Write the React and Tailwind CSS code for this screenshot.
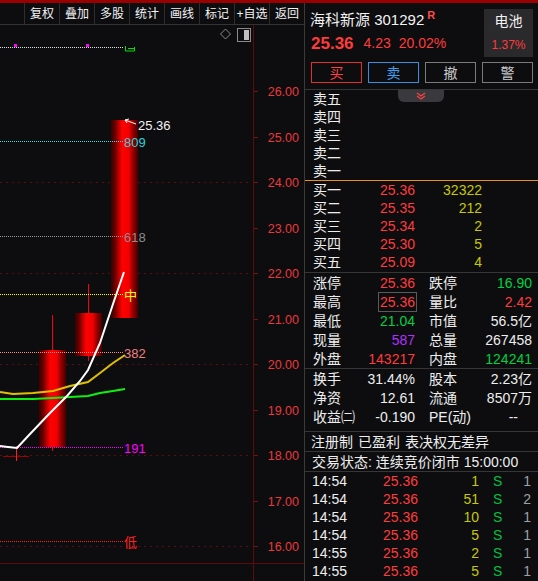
import React from "react";

const FONT = "font-['Liberation_Sans','Noto_Sans_CJK_SC',sans-serif]";

const tools = ["复权", "叠加", "多股", "统计", "画线", "标记", "+自选", "返回"];
const sells = ["卖五", "卖四", "卖三", "卖二", "卖一"];
const buys = [
  ["买一", "25.36", "32322"],
  ["买二", "25.35", "212"],
  ["买三", "25.34", "2"],
  ["买四", "25.30", "5"],
  ["买五", "25.09", "4"],
];

// label, value, colour, label, value, colour
const stats = [
  ["涨停", "25.36", "text-[#ff3b3b]", "跌停", "16.90", "text-[#00d040]"],
  ["最高", "25.36", "text-[#ff3b3b]", "量比", "2.42", "text-[#ff3b3b]"],
  ["最低", "21.04", "text-[#00d040]", "市值", "56.5亿", "text-[#eeeeee]"],
  ["现量", "587", "text-[#b030ff]", "总量", "267458", "text-[#eeeeee]"],
  ["外盘", "143217", "text-[#ff3b3b]", "内盘", "124241", "text-[#00d040]"],
];

const stats2 = [
  ["换手", "31.44%", "股本", "2.23亿"],
  ["净资", "12.61", "流通", "8507万"],
  ["收益㈡", "-0.190", "PE(动)", "--"],
];

const ticks = [
  ["14:54", "25.36", "1", "1"],
  ["14:54", "25.36", "51", "2"],
  ["14:54", "25.36", "10", "1"],
  ["14:54", "25.36", "5", "1"],
  ["14:55", "25.36", "2", "1"],
  ["14:55", "25.36", "5", "1"],
];

const py = (p) => Math.round(91 + (26 - p) * 45.5);

function Chart() {
  const prices = [26, 25, 24, 23, 22, 21, 20, 19, 18, 17, 16];
  const fib = [
    { y: 141, c: "#3ee0e0", t: "809", tc: "#30d0d8" },
    { y: 236, c: "#9a9a9a", t: "618", tc: "#8c8c8c" },
    { y: 294, c: "#ffff00", t: "中", tc: "#ffff00" },
    { y: 352, c: "#ff8a8a", t: "382", tc: "#f08080" },
    { y: 447, c: "#ff00ff", t: "191", tc: "#ff00ff" },
    { y: 541, c: "#ff2020", t: "低", tc: "#ff2020" },
  ];
  return (
    <svg width="304" height="556" viewBox="0 25 304 556" className="block" fontFamily="Liberation Sans, Noto Sans CJK SC, sans-serif">
      <defs>
        <linearGradient id="cg" x1="0" x2="1" y1="0" y2="0">
          <stop offset="0" stopColor="#3a0000" />
          <stop offset="0.15" stopColor="#680000" />
          <stop offset="0.3" stopColor="#c40000" />
          <stop offset="0.42" stopColor="#ff0000" />
          <stop offset="0.66" stopColor="#f00000" />
          <stop offset="0.83" stopColor="#8c0000" />
          <stop offset="1" stopColor="#480000" />
        </linearGradient>
      </defs>

      {/* grid + axis */}
      {[24, 22, 20, 18, 16].map((p) => (
        <line key={p} x1="0" x2="250" y1={py(p) + 0.5} y2={py(p) + 0.5} stroke="#5e0b0b" strokeDasharray="2 4" />
      ))}
      <line x1="253.5" x2="253.5" y1="25" y2="581" stroke="#5e0b0b" />
      <line x1="0" x2="304" y1="563.5" y2="563.5" stroke="#5e0b0b" />
      {prices.map((p) => (
        <g key={p}>
          <line x1="254" x2="258" y1={py(p) + 0.5} y2={py(p) + 0.5} stroke="#7a1212" />
          <text x="299" y={py(p) + 0.5} textAnchor="end" dominantBaseline="central" fill="#e83a3a" fontSize="12.5">
            {p.toFixed(2)}
          </text>
        </g>
      ))}

      {/* top icons */}
      <polygon points="225.5,29 230.5,34 225.5,39 220.5,34" fill="none" stroke="#8a8a8a" />
      <rect x="237.5" y="28.5" width="13" height="13" fill="none" stroke="#8a8a8a" />
      <rect x="244" y="30" width="5" height="10" fill="#c0c0c0" />

      {/* top marker line */}
      <line x1="0" x2="124" y1="47.5" y2="47.5" stroke="#e0e0e0" strokeDasharray="1 1" />
      <rect x="14" y="44" width="3" height="3" fill="#ff00ff" />
      <rect x="86" y="44" width="3" height="3" fill="#ff00ff" />
      <path d="M125.5 46 v5 h9 v-4 M128 48.5 h6" fill="none" stroke="#00e000" />

      {/* candles */}
      <line x1="52.5" x2="52.5" y1="315" y2="451" stroke="#ff0000" />
      <rect x="39" y="350" width="27" height="97" fill="url(#cg)" />
      <line x1="88.5" x2="88.5" y1="284" y2="361" stroke="#ff0000" />
      <rect x="75" y="313" width="27" height="43" fill="url(#cg)" />
      <rect x="111" y="120" width="27" height="198" fill="url(#cg)" />

      {/* fib lines */}
      {fib.map((f) => (
        <g key={f.t}>
          <line x1="0" x2="123" y1={f.y + 0.5} y2={f.y + 0.5} stroke={f.c} strokeDasharray="1 1" />
          <text x="124" y={f.y + 1} dominantBaseline="central" fill={f.tc} fontSize="13">
            {f.t}
          </text>
        </g>
      ))}

      {/* high marker */}
      <path d="M125 120 L136 124 M125 120 L129 119 M125 120 L127 123" fill="none" stroke="#ffffff" strokeWidth="1" />
      <text x="138" y="125.5" dominantBaseline="central" fill="#f2f2f2" fontSize="13">
        25.36
      </text>

      {/* low cross */}
      <line x1="3" x2="29" y1="456.5" y2="456.5" stroke="#a00000" />
      <line x1="16.5" x2="16.5" y1="446" y2="461" stroke="#ff2020" />

      {/* moving averages */}
      <polyline
        points="0,399 33,399 53,398 70,397 88,396 100,393 113,391 125,389"
        fill="none"
        stroke="#10f010"
        strokeWidth="2"
      />
      <polyline
        points="0,392 13,394 33,393 53,391 70,386 88,382 100,373 113,363 125,355"
        fill="none"
        stroke="#e0c000"
        strokeWidth="2"
      />
      <polyline
        points="0,446 8,447 17,448 30,434 50,413 67,396 80,381 88,370 100,343 113,304 124,272"
        fill="none"
        stroke="#ffffff"
        strokeWidth="2"
      />
    </svg>
  );
}

function Chevrons() {
  return (
    <svg width="10" height="8" viewBox="0 0 10 8">
      <polyline points="1,1 5,4 9,1" fill="none" stroke="#ff4040" strokeWidth="1.2" />
      <polyline points="1,4 5,7 9,4" fill="none" stroke="#ff4040" strokeWidth="1.2" />
    </svg>
  );
}

export default function App() {
  return (
    <div className={`w-[538px] h-[581px] overflow-hidden bg-[#0d0d10] text-[#eeeeee] flex flex-col ${FONT}`}>
      <div className="h-[3px] bg-[#990000] shrink-0" />
      <div className="flex flex-1 min-h-0">
        {/* left: toolbar + chart */}
        <div className="w-[305px] border-r border-[#3a3a3a] flex flex-col">
          <div className="h-[22px] border-b border-[#333333] flex">
            <div className="w-[24px]" />
            {tools.map((t) => (
              <div
                key={t}
                className="w-[35px] border-l border-[#2e2e2e] flex items-center justify-center text-[12px] leading-none text-[#f2f2f2]"
              >
                {t}
              </div>
            ))}
          </div>
          <Chart />
        </div>

        {/* right: quote panel */}
        <div className="w-[233px] flex flex-col">
          <div className="h-[87px] border-b border-[#363636] pl-[6px] pr-[5px]">
            <div className="flex justify-between pt-[6px]">
              <div>
                <div className="h-[20px] flex items-center text-[15px] leading-none text-[#f2f2f2] -ml-[1px]">
                  海科新源 301292
                  <span className="self-start mt-[1px] ml-[3px] text-[11px] font-bold text-[#ff4a4a]">R</span>
                </div>
                <div className="h-[22px] mt-[3px] flex items-center leading-none text-[#ff3b3b]">
                  <span className="text-[17px] font-bold">25.36</span>
                  <span className="ml-[10px] text-[14px]">4.23</span>
                  <span className="ml-[8px] text-[14px]">20.02%</span>
                </div>
              </div>
              <div className="w-[49px] h-[48px] bg-[#2a2a2d] flex flex-col items-center">
                <div className="mt-[2px] h-[20px] flex items-center text-[14px] text-[#f2f2f2]">电池</div>
                <div className="mt-[4px] h-[20px] flex items-center text-[12px] text-[#ff3b3b]">1.37%</div>
              </div>
            </div>
            <div className="mt-[5px] flex gap-[6px] text-[14px] leading-none">
              <div className="w-[51px] h-[21px] border border-[#e03030] text-[#ff4040] flex items-center justify-center">买</div>
              <div className="w-[51px] h-[21px] border border-[#3a8ee0] text-[#40a0f0] flex items-center justify-center">卖</div>
              <div className="w-[51px] h-[21px] border border-[#7a7a7a] text-[#c8c8c8] flex items-center justify-center">撤</div>
              <div className="w-[51px] h-[21px] border border-[#7a7a7a] text-[#c8c8c8] flex items-center justify-center">警</div>
            </div>
          </div>

          {/* order book */}
          <div className="relative">
            <div className="absolute left-[93px] top-0 w-[46px] h-[12px] bg-[#3a3a3e] rounded-b-[6px] flex items-center justify-center">
              <Chevrons />
            </div>
            {sells.map((s) => (
              <div key={s} className="h-[18px] flex items-center pl-[8px] text-[14px] leading-none">
                {s}
              </div>
            ))}
          </div>
          <div className="h-px bg-[#e8921c]" />
          <div className="h-[92px] border-b border-[#363636]">
            {buys.map(([l, p, v]) => (
              <div key={l} className="h-[18px] flex items-center pl-[8px] text-[14px] leading-none">
                <span className="w-[40px]">{l}</span>
                <span className="w-[62px] text-right text-[#ff3b3b]">{p}</span>
                <span className="w-[67px] text-right text-[#c8c800]">{v}</span>
              </div>
            ))}
          </div>

          {/* stats */}
          <div className="h-[96px] border-b border-[#363636]">
            {stats.map(([l1, v1, c1, l2, v2, c2]) => (
              <div key={l1} className="h-[19px] flex items-center pl-[8px] text-[14px] leading-none">
                <span className="w-[40px]">{l1}</span>
                <span className="w-[62px] flex justify-end">
                  {l1 === "最高" ? (
                    <span className={`-mr-[2px] px-[1px] py-[2px] border border-[#5a5a5a] ${c1}`}>{v1}</span>
                  ) : (
                    <span className={c1}>{v1}</span>
                  )}
                </span>
                <span className="ml-[14px] w-[40px]">{l2}</span>
                <span className={`w-[63px] text-right ${c2}`}>{v2}</span>
              </div>
            ))}
          </div>
          <div className="h-[63px] border-b border-[#363636]">
            {stats2.map(([l1, v1, l2, v2]) => (
              <div key={l1} className="h-[19px] flex items-center pl-[8px] text-[14px] leading-none">
                <span className="w-[40px] whitespace-nowrap">{l1}</span>
                <span className="w-[62px] text-right">{v1}</span>
                <span className="ml-[14px] w-[40px] whitespace-nowrap">{l2}</span>
                <span className={`w-[63px] text-right ${v2 === "--" ? "pr-[14px]" : ""}`}>{v2}</span>
              </div>
            ))}
          </div>
          <div className="h-[20px] border-b border-[#363636] flex items-center gap-[5px] pl-[6px] text-[14px] leading-none">
            <span>注册制</span>
            <span>已盈利</span>
            <span>表决权无差异</span>
          </div>
          <div className="h-[20px] border-b border-[#363636] flex items-center pl-[7px] text-[14px] leading-none whitespace-nowrap">
            交易状态: 连续竞价闭市 15:00:00
          </div>

          {/* ticks */}
          <div>
            {ticks.map(([t, p, v, n], i) => (
              <div key={i} className="h-[18px] flex items-center pl-[7px] text-[14px] leading-none">
                <span className="w-[40px]">{t}</span>
                <span className="w-[66px] text-right text-[#ff3b3b]">{p}</span>
                <span className="w-[61px] text-right text-[#c8c800]">{v}</span>
                <span className="ml-[14px] w-[20px] text-[#00c040]">S</span>
                <span className="w-[18px] text-right text-[#a0a0a0]">{n}</span>
              </div>
            ))}
          </div>
        </div>
      </div>
    </div>
  );
}
